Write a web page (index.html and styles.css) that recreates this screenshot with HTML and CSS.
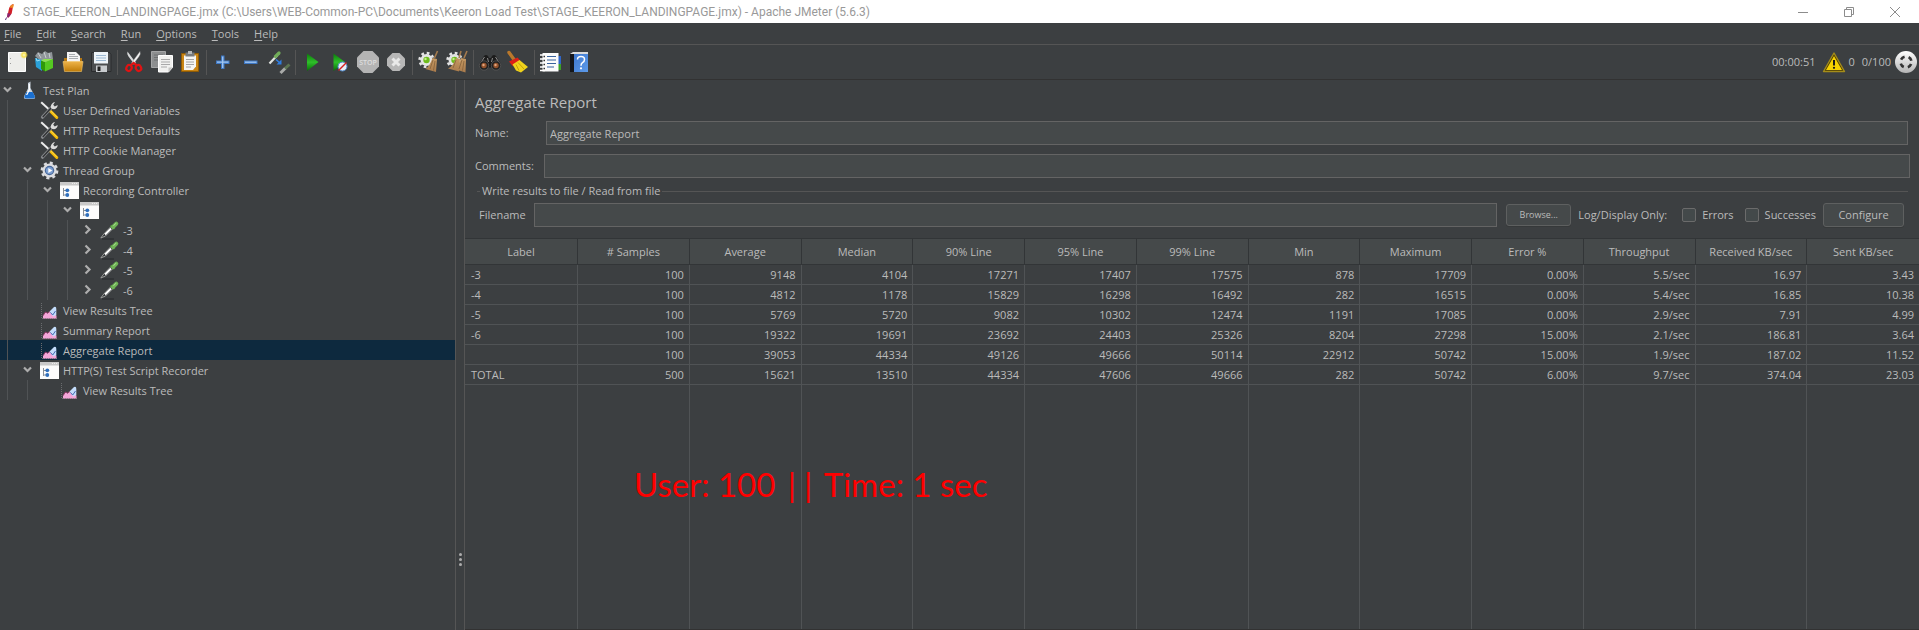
FILE: index.html
```
<!DOCTYPE html>
<html lang="en">
<head>
<meta charset="utf-8">
<title>STAGE_KEERON_LANDINGPAGE.jmx - Apache JMeter (5.6.3)</title>
<link rel="stylesheet" href="styles.css">
</head>
<body>
<svg class="defs" aria-hidden="true">
  <defs>
    <linearGradient id="g-green" x1="0" y1="0" x2="0" y2="1"><stop offset="0" stop-color="#0a7d0a"/><stop offset=".5" stop-color="#2fbf2a"/><stop offset="1" stop-color="#057005"/></linearGradient>
    <linearGradient id="g-orange" x1="0" y1="0" x2="0" y2="1"><stop offset="0" stop-color="#eeb44a"/><stop offset="1" stop-color="#c07c08"/></linearGradient>
    <linearGradient id="g-blue" x1="0" y1="0" x2="1" y2="1"><stop offset="0" stop-color="#3f78cf"/><stop offset="1" stop-color="#5d9bea"/></linearGradient>
    <linearGradient id="g-straw" x1="0" y1="0" x2="0" y2="1"><stop offset="0" stop-color="#c79a63"/><stop offset="1" stop-color="#a97b4c"/></linearGradient>
    <linearGradient id="g-metal" x1="0" y1="0" x2="0" y2="1"><stop offset="0" stop-color="#fff"/><stop offset="1" stop-color="#b4b4b4"/></linearGradient>
    <radialGradient id="g-glow"><stop offset="0" stop-color="#fffbd0"/><stop offset=".5" stop-color="#f6df4e"/><stop offset="1" stop-color="#f6df4e" stop-opacity="0"/></radialGradient>
  </defs>
  <symbol id="i-chev-down" viewBox="0 0 15 20"><path d="M4 7.500l3.500 3.500 3.500-3.500" fill="none" stroke="#adadad" stroke-width="2.200"/></symbol>
  <symbol id="i-chev-right" viewBox="0 0 15 20"><path d="M5.500 5.500l4 4-4 4" fill="none" stroke="#adadad" stroke-width="2.200"/></symbol>
  <symbol id="i-flask" viewBox="0 0 20 20"><path d="M7.500 3l1.500-.5L10.500 1.500V8l4.500 8.500q.5 2.500-2 2.500H6q-2.500 0-2-2.500L8 8.500V3z" fill="#c9d3de"/><path d="M6.300 12h6.400l2.200 4.500q.3 2-1.500 2H6q-1.800 0-1.500-2z" fill="#1a6fd0"/><path d="M8.700 4H10v6L7.300 15H6L8.700 9.500z" fill="#fff"/></symbol>
  <symbol id="i-tools" viewBox="0 0 20 20"><path d="M1.200 2.200l9 8.300" stroke="#ececec" stroke-width="2"/><path d="M9.800 10.500l7 7" stroke="#f3b905" stroke-width="3" stroke-linecap="round"/><path d="M10.800 11l6 6" stroke="#ffe16a" stroke-width=".8"/><path d="M2.500 17.200L12 7" stroke="#85878a" stroke-width="3.200" stroke-linecap="round"/><path d="M2.800 17L12 7" stroke="#2f3133" stroke-width="1.300"/><path d="M11 8.200c-.6-3 1-5.700 4-6.200l-1.800 2.800 1.600 1.600L17.700 5c0 3-2.500 4.600-5 4.100z" fill="#dcdcdc"/></symbol>
  <symbol id="i-gear" viewBox="0 0 20 20"><circle cx="9.500" cy="10.500" r="7" fill="#dcdde0"/><circle cx="9.500" cy="10.500" r="7.600" fill="none" stroke="#dcdde0" stroke-width="2.600" stroke-dasharray="3 2.970"/><circle cx="9.500" cy="10.500" r="4.700" fill="#45669a"/><circle cx="9.500" cy="10.500" r="3.600" fill="#7d9fd0"/><path d="M8.300 8l4 2.500-4 2.500z" fill="#fff"/></symbol>
  <symbol id="i-window" viewBox="0 0 20 20"><path d="M0 2h19v17H0z" fill="#fcfcfc"/><path d="M0 2h19v3.500H0z" fill="#c9c9c9"/><path d="M12 3.500h6" stroke="#eee" stroke-dasharray="1 1"/><path d="M3.500 8v8M3.500 10.500h3M3.500 15h3" stroke="#8a8f96" fill="none"/><circle cx="7.300" cy="10.300" r="1.900" fill="#2f6fbd"/><circle cx="7.300" cy="15" r="1.900" fill="#2f6fbd"/></symbol>
  <symbol id="i-pipette" viewBox="0 0 20 20"><path d="M2 19h12" stroke="#2b2d2f" stroke-width="1.200"/><path d="M.8 18l3-4L11 6.500l2 2L5.500 16z" fill="#2f3133" stroke="#a6a8a6" stroke-width=".9"/><path d="M5 14.500l6-6" stroke="#fff" stroke-width="1.800"/><path d="M10.500 5.500l4 3.500" stroke="#4f8f3c" stroke-width="2.200"/><path d="M13 7L16.300 3.600" stroke="#6fb356" stroke-width="4" stroke-linecap="round"/><path d="M13.500 5.800L16 3.200" stroke="#b0e09a" stroke-width="1"/></symbol>
  <symbol id="i-chart" viewBox="0 0 20 20"><path d="M1.500 3v15M2 18.500h15" stroke="#6b6d6f" stroke-dasharray="1 1"/><path d="M3 16l2.500-3.500 2 1 2-1.500 7 3.500v3H3z" fill="#f4a6d8"/><path d="M3 15.500l2.500-3.500 2 1 2-1.500" fill="none" stroke="#9a3a6c" stroke-width=".9"/><path d="M9.500 11.500L14 7q2.300-1 2.300 2v6l-3 1.500z" fill="#c3dcfb"/><path d="M10.500 12.500l2.200 2.500 2.800-4" fill="none" stroke="#3c5fae" stroke-width=".9"/></symbol>
  <symbol id="i-mgear" viewBox="0 0 28 28"><circle cx="11.500" cy="12" r="6" fill="#e4e4e4"/><circle cx="11.500" cy="12" r="6.900" fill="none" stroke="#e4e4e4" stroke-width="2.600" stroke-dasharray="2.700 2.720"/><circle cx="11.500" cy="12" r="3.200" fill="#6dbb1c"/><circle cx="10.500" cy="11" r="1.200" fill="#c4ee8a"/></symbol>
</svg>

<header class="titlebar">
  <svg class="feather" viewBox="0 0 16 18" aria-hidden="true"><path d="M11.500 1q-4 1-4.800 6l-1.500 7 1.500.5 3-4z" fill="#d22128"/><path d="M11.500 1q-3 .5-4 3.500l3.500.5q1-2.500.5-4z" fill="#ee8a25"/><path d="M5.500 10l3.500 1-2.500 3.500-1.500-.3z" fill="#8a2470"/><path d="M4.500 14.500L3.500 17" stroke="#5d2a7a"/></svg>
  <span class="caption">STAGE_KEERON_LANDINGPAGE.jmx (C:\Users\WEB-Common-PC\Documents\Keeron Load Test\STAGE_KEERON_LANDINGPAGE.jmx) - Apache JMeter (5.6.3)</span>
  <div class="window-buttons">
    <button aria-label="Minimize"><svg viewBox="0 0 12 12"><path d="M1 6.500h10"/></svg></button>
    <button aria-label="Restore"><svg viewBox="0 0 12 12"><path d="M1.500 3.500h7v7h-7zM3.500 3.500v-2h7v7h-2"/></svg></button>
    <button aria-label="Close"><svg viewBox="0 0 12 12"><path d="M1 1l10 10M11 1L1 11"/></svg></button>
  </div>
</header>

<nav class="menubar">
  <button><u>F</u>ile</button><button><u>E</u>dit</button><button><u>S</u>earch</button><button><u>R</u>un</button><button><u>O</u>ptions</button><button><u>T</u>ools</button><button><u>H</u>elp</button>
</nav>

<div class="toolbar">
  <button aria-label="New"><svg viewBox="0 0 28 28"><path d="M5.500 4.500h17v19h-17z" fill="#ededea" stroke="#fff"/><path d="M7.500 10v10" stroke="#9c9c9c" stroke-dasharray="1 4"/><circle cx="21" cy="7" r="4" fill="url(#g-glow)"/></svg></button>
  <button aria-label="Templates"><svg viewBox="0 0 28 28"><path d="M4 8l3-4 4 2 3-3 3 2 4-1 1 7-9 5z" fill="#8f9599"/><path d="M7 5l3 5M13 4l2 6M18 5l1 5" stroke="#c9cdd0"/><path d="M4 10l7 2v11l-6-4z" fill="#2aa0d8"/><path d="M5 10l1 3 3-1" stroke="#93dcf5" fill="none"/><path d="M10 12.500l4 1.500v9.500l-4-2.500z" fill="#2f9a08"/><path d="M14 14l8-3v9l-8 3.500z" fill="#55c922"/><path d="M10 12.500l3-1.500 9 0-8 3z" fill="#8be24f"/></svg></button>
  <button aria-label="Open"><svg viewBox="0 0 28 28"><path d="M8 4h9l4 4v8H8z" fill="#f4f4f4"/><path d="M10 6.500h6M10 8.500h9M10 10.500h9" stroke="#a9adb0"/><path d="M5 10h3v4h13v-4h2v12H5z" fill="#b37612"/><path d="M4 13.500h20l-1.500 10H5.500z" fill="url(#g-orange)" stroke="#f1c46c" stroke-width=".6"/></svg></button>
  <button aria-label="Save"><svg viewBox="0 0 28 28"><path d="M4.500 4.500h18l1.500 2v17h-19.500z" fill="#4c4e50" stroke="#2b2c2e"/><path d="M7 4h14v11.500H7z" fill="#eef4f9"/><path d="M9 7.500h10M9 10h10M9 12.500h10" stroke="#9cb9d3"/><path d="M9 17.500h11v6.500H9z" fill="#c9cccf"/><path d="M10.500 18.500h3v4.500h-3z" fill="#222"/></svg></button>
  <span class="sep"></span>
  <button aria-label="Cut"><svg viewBox="0 0 28 28"><path d="M7.500 3.500q-1 3 1 5l6 8 1.500-1.500z" fill="#d8dadb"/><path d="M20 3.500q1 3-1 5l-6 8-1.500-1.500z" fill="#f3f3f3" stroke="#999" stroke-width=".4"/><g fill="none" stroke="#e01313" stroke-width="2.200"><ellipse cx="9" cy="20" rx="2.600" ry="3" transform="rotate(30 9 20)"/><ellipse cx="18.500" cy="20" rx="2.600" ry="3" transform="rotate(-30 18.500 20)"/><path d="M10.500 17.500l3-2.500 3.500 2.500"/></g></svg></button>
  <button aria-label="Copy"><svg viewBox="0 0 28 28"><path d="M3.500 3.500h14v16h-14z" fill="#8d8f90" stroke="#a5a6a7"/><path d="M6 7h9M6 9.500h9M6 12h9" stroke="#6d6f70"/><path d="M10.500 7.500h14v12l-4 4.500h-10z" fill="#f1f1ef" stroke="#fff"/><path d="M13 11.500h9M13 14h9M13 16.500h9M13 19h6" stroke="#a9a9a9"/><path d="M24.500 19.500h-4v4.500z" fill="#c5c5c3"/></svg></button>
  <button aria-label="Paste"><svg viewBox="0 0 28 28"><path d="M5.500 5.500h17v18h-17z" fill="#c98514" stroke="#8f5b05"/><path d="M8 7.500h12v11l-3 3.500H8z" fill="#f5f5f3"/><path d="M10 11.500h8M10 14h8M10 16.500h8M10 19h5" stroke="#a4a4a4"/><path d="M9.500 4.500h9v4h-9z" fill="#777a7c"/><path d="M12 3h4v3h-4z" fill="#b5b7b8"/></svg></button>
  <span class="sep"></span>
  <button aria-label="Expand all"><svg viewBox="0 0 28 28"><path d="M12 7.500h3.500v5h5V16h-5v5H12v-5H7v-3.500h5z" fill="#3f78c4"/><path d="M13.700 8.500v11.500M8 14.200h11.500" stroke="#a3c8f2" stroke-width="1.300"/></svg></button>
  <button aria-label="Collapse all"><svg viewBox="0 0 28 28"><path d="M7 12.500h13.500V16H7z" fill="#3f78c4"/><path d="M8 14.200h11.500" stroke="#a3c8f2" stroke-width="1.300"/></svg></button>
  <button aria-label="Toggle"><svg viewBox="0 0 28 28"><path d="M4.500 15.500l8-8.500" stroke="#e1e4e1" stroke-width="2.200"/><path d="M10.500 8.500L14 5" stroke="#72ad5a" stroke-width="3.200" stroke-linecap="round"/><path d="M11 11.500l4 3.500" stroke="#2f7de0" stroke-width="1.600"/><path d="M16.500 11.500v5h-5z" fill="#2f7de0"/><path d="M15.500 25l5-5" stroke="#a9aba9" stroke-width="3"/><path d="M20 20.500l4.500-4" stroke="#5c7552" stroke-width="3"/></svg></button>
  <span class="sep"></span>
  <button aria-label="Start"><svg viewBox="0 0 28 28"><path d="M9 5.500v17.500L20.500 14z" fill="url(#g-green)"/></svg></button>
  <button aria-label="Start no pauses"><svg viewBox="0 0 28 28"><path d="M7.500 5.500v17.500L19 14z" fill="url(#g-green)"/><circle cx="16.500" cy="18.500" r="4.500" fill="#e8eef6" stroke="#4c86c8"/><path d="M12.500 22.500l8-8" stroke="#d32020" stroke-width="1.400"/></svg></button>
  <button aria-label="Stop" disabled><svg viewBox="0 0 28 28"><path d="M9.500 3h9L25 9.500v9L18.500 25h-9L3 18.500v-9z" fill="#b4b4b4"/><text x="14" y="17" class="stop-text">STOP</text></svg></button>
  <button aria-label="Shutdown" disabled><svg viewBox="0 0 28 28"><path d="M10.500 5h7L23 10.500v7L17.500 23h-7L5 17.500v-7z" fill="#b7b7b7"/><path d="M10.500 10.500l7 7M17.500 10.500l-7 7" stroke="#e9e9e9" stroke-width="3"/></svg></button>
  <span class="sep"></span>
  <button aria-label="Clear"><svg viewBox="0 0 28 28"><use href="#i-mgear"/><path d="M22.500 3l-3 7" stroke="#a57b4e" stroke-width="1.600"/><path d="M17.500 10l4.500 1-1 13-10.500-3q4-2.500 7-11z" fill="url(#g-straw)"/><path d="M18 12l-3 9M20 13l-1.500 9.500" stroke="#7d5c36" stroke-width=".7"/></svg></button>
  <button aria-label="Clear all"><svg viewBox="0 0 28 28"><use href="#i-mgear"/><path d="M18 3l-2 7M24 3l-3 7" stroke="#a57b4e" stroke-width="1.600"/><path d="M13 10l4 1-1 12.500-11-3q5-2 8-10.500z" fill="url(#g-straw)"/><path d="M18 10l5 1-.5 13.500-11-3.500q4-2 6.500-11z" fill="url(#g-straw)"/><path d="M19 12l-3 9M21 13l-1.500 9.500M13 12l-3 8" stroke="#7d5c36" stroke-width=".7"/></svg></button>
  <span class="sep"></span>
  <button aria-label="Search"><svg viewBox="0 0 28 28"><path d="M8 8q2-2 4 0l1 2h2l1-2q2-2 4 0l4.500 7.500v4h-21v-4z" fill="#1c1c1c"/><path d="M8.500 9l-3.500 5.500M19.500 9l3.500 5.500M11.500 10l1 4M16.500 10l-1 4" stroke="#8c8c8c"/><circle cx="8" cy="17.500" r="4.700" fill="#222" stroke="#5f5f5f" stroke-width=".7"/><circle cx="20" cy="17.500" r="4.700" fill="#222" stroke="#5f5f5f" stroke-width=".7"/><circle cx="8" cy="17.500" r="2.700" fill="#95532c"/><circle cx="20" cy="17.500" r="2.700" fill="#95532c"/><circle cx="7.500" cy="17" r="1.200" fill="#e0a47e"/><circle cx="19.500" cy="17" r="1.200" fill="#e0a47e"/></svg></button>
  <button aria-label="Reset search"><svg viewBox="0 0 28 28"><path d="M5 4.500l5 7" stroke="#b9782b" stroke-width="3.400" stroke-linecap="round"/><path d="M5 13.500l8.500-4 3 3.500-8 5z" fill="#dc1f17"/><path d="M8.500 16.500l7-4.500 8.500 7-7 5.500-5-2z" fill="#f0d21c"/><path d="M12 16.500l3 6M14 14.500l6 6.500" stroke="#b89605" stroke-width=".8"/></svg></button>
  <span class="sep"></span>
  <button aria-label="Function helper"><svg viewBox="0 0 28 28"><path d="M20 8h4v8h-4z" fill="#2f66c8"/><path d="M20 16h4v6h-4z" fill="#3c9f28"/><path d="M5.500 5h16v18.500h-16z" fill="#fbfbfb"/><path d="M3 7h5M3 11h5M3 15h5M3 19h5M3 22.500h5" stroke="#fff" stroke-width="1.600"/><path d="M6.500 8.500h1.500M6.500 12.500h1.500M6.500 16.500h1.500M6.500 20.500h1.500" stroke="#333" stroke-width="1.400"/><path d="M10 8.500h9M10 12h9M10 15.500h9M10 19h7" stroke="#39639d" stroke-width="1.100"/></svg></button>
  <button aria-label="Help"><svg viewBox="0 0 28 28"><path d="M5 6l3-2h15v2z" fill="#dadada"/><path d="M5 6h4v18H5z" fill="#15171c"/><path d="M9 6h14v18H9z" fill="url(#g-blue)"/><path d="M12.500 11.500q0-3 3.500-3t3.500 3q0 2-2 3.200-1.500 1-1.500 3" fill="none" stroke="#fff" stroke-width="1.500"/><circle cx="16" cy="20.300" r="1.100" fill="#fff"/></svg></button>
  <div class="status">
    <span>00:00:51</span>
    <button aria-label="Log errors"><svg viewBox="0 0 24 24"><path d="M12 3L22.500 21.500h-21z" fill="#4a3a00" stroke="#a48c1a" stroke-width="1.400" stroke-linejoin="round"/><path d="M12 6l8 14H4z" fill="#f6d100"/><path d="M12 10v5.500" stroke="#1a1a1a" stroke-width="2"/><circle cx="12" cy="17.800" r="1.100" fill="#1a1a1a"/></svg></button>
    <span class="errors">0</span>
    <span>0/100</span>
    <svg class="remote" viewBox="0 0 24 24" aria-hidden="true"><circle cx="12" cy="12" r="11" fill="url(#g-metal)"/><circle cx="12" cy="12" r="5.500" fill="none" stroke="#333" stroke-width="2.600" stroke-dasharray="4.400 4.240" stroke-dashoffset="-2.100"/></svg>
  </div>
</div>

<main class="workspace">
  <ul class="tree">
    <li><svg class="chev"><use href="#i-chev-down"/></svg><svg class="icon"><use href="#i-flask"/></svg>Test Plan</li>
    <li><i></i><b></b><svg class="icon"><use href="#i-tools"/></svg>User Defined Variables</li>
    <li><i></i><b></b><svg class="icon"><use href="#i-tools"/></svg>HTTP Request Defaults</li>
    <li><i></i><b></b><svg class="icon"><use href="#i-tools"/></svg>HTTP Cookie Manager</li>
    <li><i></i><svg class="chev"><use href="#i-chev-down"/></svg><svg class="icon"><use href="#i-gear"/></svg>Thread Group</li>
    <li><i></i><i></i><svg class="chev"><use href="#i-chev-down"/></svg><svg class="icon"><use href="#i-window"/></svg>Recording Controller</li>
    <li><i></i><i></i><i></i><svg class="chev"><use href="#i-chev-down"/></svg><svg class="icon"><use href="#i-window"/></svg></li>
    <li><i></i><i></i><i></i><i></i><svg class="chev"><use href="#i-chev-right"/></svg><svg class="icon"><use href="#i-pipette"/></svg>-3</li>
    <li><i></i><i></i><i></i><i></i><svg class="chev"><use href="#i-chev-right"/></svg><svg class="icon"><use href="#i-pipette"/></svg>-4</li>
    <li><i></i><i></i><i></i><i></i><svg class="chev"><use href="#i-chev-right"/></svg><svg class="icon"><use href="#i-pipette"/></svg>-5</li>
    <li><i></i><i></i><i></i><i></i><svg class="chev"><use href="#i-chev-right"/></svg><svg class="icon"><use href="#i-pipette"/></svg>-6</li>
    <li><i></i><b></b><svg class="icon"><use href="#i-chart"/></svg>View Results Tree</li>
    <li><i></i><b></b><svg class="icon"><use href="#i-chart"/></svg>Summary Report</li>
    <li class="selected"><i></i><b></b><svg class="icon"><use href="#i-chart"/></svg>Aggregate Report</li>
    <li><i></i><svg class="chev"><use href="#i-chev-down"/></svg><svg class="icon"><use href="#i-window"/></svg>HTTP(S) Test Script Recorder</li>
    <li><i></i><i></i><b></b><svg class="icon"><use href="#i-chart"/></svg>View Results Tree</li>
  </ul>
  <div class="divider"><span></span><span></span><span></span></div>
  <section class="report">
    <h1>Aggregate Report</h1>
    <div class="field name-field"><label for="name">Name:</label><input id="name" type="text" value="Aggregate Report"></div>
    <div class="field comment-field"><label for="comments">Comments:</label><input id="comments" type="text"></div>
    <fieldset>
      <legend>Write results to file / Read from file</legend>
      <div class="file-row">
        <label for="filename">Filename</label>
        <input id="filename" type="text">
        <button class="browse">Browse...</button>
        <span class="log-label">Log/Display Only:</span>
        <label class="check"><input type="checkbox">Errors</label>
        <label class="check"><input type="checkbox">Successes</label>
        <button class="configure">Configure</button>
      </div>
    </fieldset>
    <div class="table-area">
      <table>
        <thead><tr><th>Label</th><th># Samples</th><th>Average</th><th>Median</th><th>90% Line</th><th>95% Line</th><th>99% Line</th><th>Min</th><th>Maximum</th><th>Error %</th><th>Throughput</th><th>Received KB/sec</th><th>Sent KB/sec</th></tr></thead>
        <tbody>
          <tr><td>-3</td><td>100</td><td>9148</td><td>4104</td><td>17271</td><td>17407</td><td>17575</td><td>878</td><td>17709</td><td>0.00%</td><td>5.5/sec</td><td>16.97</td><td>3.43</td></tr>
          <tr><td>-4</td><td>100</td><td>4812</td><td>1178</td><td>15829</td><td>16298</td><td>16492</td><td>282</td><td>16515</td><td>0.00%</td><td>5.4/sec</td><td>16.85</td><td>10.38</td></tr>
          <tr><td>-5</td><td>100</td><td>5769</td><td>5720</td><td>9082</td><td>10302</td><td>12474</td><td>1191</td><td>17085</td><td>0.00%</td><td>2.9/sec</td><td>7.91</td><td>4.99</td></tr>
          <tr><td>-6</td><td>100</td><td>19322</td><td>19691</td><td>23692</td><td>24403</td><td>25326</td><td>8204</td><td>27298</td><td>15.00%</td><td>2.1/sec</td><td>186.81</td><td>3.64</td></tr>
          <tr><td></td><td>100</td><td>39053</td><td>44334</td><td>49126</td><td>49666</td><td>50114</td><td>22912</td><td>50742</td><td>15.00%</td><td>1.9/sec</td><td>187.02</td><td>11.52</td></tr>
          <tr><td>TOTAL</td><td>500</td><td>15621</td><td>13510</td><td>44334</td><td>47606</td><td>49666</td><td>282</td><td>50742</td><td>6.00%</td><td>9.7/sec</td><td>374.04</td><td>23.03</td></tr>
          <tr class="filler"><td></td><td></td><td></td><td></td><td></td><td></td><td></td><td></td><td></td><td></td><td></td><td></td><td></td></tr>
        </tbody>
      </table>
      <p class="note">User: 100 <span>|</span><span>|</span> Time: 1 sec</p>
    </div>
  </section>
</main>
</body>
</html>
```
FILE: styles.css
```
* { box-sizing: border-box; }
html, body { height: 100%; margin: 0; }
body {
  display: flex;
  flex-direction: column;
  overflow: hidden;
  background: #3c3f41;
  color: #bbbbbb;
  font: 11px/16px "Open Sans", "Noto Sans", sans-serif;
}
button, input { font: inherit; color: inherit; }
button { padding: 0; border: 0; background: none; }
svg { display: block; }
.defs { position: absolute; width: 0; height: 0; }

.titlebar {
  display: flex;
  align-items: center;
  height: 23px;
  padding-left: 2px;
  background: #ffffff;
  color: #999999;
}
.caption { font: 12px/16px Roboto, "Open Sans", sans-serif; }
.feather { width: 16px; height: 18px; margin-right: 5px; }
.window-buttons { display: flex; margin-left: auto; padding-right: 1px; }
.window-buttons button { width: 46px; height: 22px; }
.window-buttons svg { width: 12px; height: 12px; margin: auto; fill: none; stroke: #8c8c8c; }

.menubar {
  display: flex;
  gap: 15px;
  height: 22px;
  padding: 0 4px;
  border-bottom: 1px solid #555555;
}
.menubar u { text-underline-offset: 2px; }

.toolbar {
  display: flex;
  align-items: center;
  height: 35px;
  padding: 0 1px 0 3px;
  border-bottom: 1px solid #323232;
}
.toolbar > button, .toolbar > button svg { width: 28px; height: 28px; }
.sep { width: 1px; height: 25px; margin: 0 2px; background: #555555; }
.stop-text { font: 600 7px "Open Sans", sans-serif; fill: #dddddd; text-anchor: middle; }
.status { display: flex; align-items: center; margin-left: auto; }
.status svg { width: 24px; height: 24px; }
.status button { margin: 0 3px 0 6px; }
.errors { margin-right: 7px; }
.remote { margin-left: 3px; }

.workspace { display: flex; flex: 1; min-height: 0; }
.tree {
  flex: 0 0 455px;
  margin: 0;
  padding: 0;
  list-style: none;
}
.tree li { display: flex; height: 20px; line-height: 22px; }
.tree i { width: 20px; height: 20px; padding-left: 7px; }
.tree i::before { content: ""; display: block; width: 1px; height: 20px; background: #505355; }
.tree b { width: 15px; }
.chev { width: 15px; height: 20px; }
.icon { width: 20px; height: 20px; margin: 0 3px 0 5px; }
.tree .selected { background: #0d293e; }

.divider {
  display: flex;
  flex: 0 0 10px;
  flex-direction: column;
  align-items: center;
  justify-content: flex-end;
  gap: 2px;
  padding-bottom: 64px;
  border: solid #555555;
  border-width: 0 1px;
}
.divider span { width: 3px; height: 3px; border-radius: 50%; background: #adadad; }

.report { display: flex; flex: 1; flex-direction: column; min-width: 0; }
h1 { margin: 11px 10px 7px; font-size: 15px; font-weight: 400; line-height: 23px; }
.field { display: flex; align-items: center; margin: 0 9px 9px 10px; }
.name-field { padding-right: 2px; }
.comment-field { margin-bottom: 4px; }
.field label { width: 69px; }
.name-field label { width: 71px; }
input[type="text"] {
  flex: 1;
  min-width: 0;
  height: 24px;
  padding: 0 3px;
  border: 1px solid #646464;
  border-radius: 0;
  background: #45494a;
}
fieldset { min-width: 0; margin: 0 11px 11px 12px; padding: 0; border: 0; border-top: 1px solid #555555; }
legend { margin-left: 3px; padding: 0 2px; line-height: 18px; }
.file-row { display: flex; align-items: center; padding: 3px 4px 0 2px; }
.file-row > label:first-child { width: 55px; }
.browse, .configure {
  border: 1px solid #5e6060;
  border-radius: 3px;
  background: #45494a;
  box-shadow: 0 1px #36393a;
}
.browse { width: 65px; height: 22px; margin: 0 7px 0 9px; font-size: 9px; }
.configure { width: 81px; height: 24px; font-size: 11px; }
.log-label { margin-right: 11px; }
.check { display: flex; align-items: center; margin-right: 7px; }
.check input {
  width: 14px;
  height: 14px;
  margin: 0 6px 0 4px;
  appearance: none;
  border: 1px solid #6b6b6b;
  border-radius: 2px;
  background: #43494a;
}

.table-area { position: relative; flex: 1; min-height: 0; }
table { width: 100%; height: 100%; table-layout: fixed; border-spacing: 0; border-bottom: 1px solid #323232; }
th, td { height: 20px; padding: 0 5px; border: solid #505355; border-width: 0 1px 1px 0; line-height: 18px; text-align: right; }
th { height: 27px; border-color: #323537; border-top-width: 1px; background: #45494a; font-weight: 400; text-align: center; }
th:first-child { width: 113px; }
td:first-child { padding-left: 6px; text-align: left; }
th:last-child, td:last-child { border-right: 0; }
.filler td { height: auto; border-bottom: 0; }
.note {
  position: absolute;
  top: 224px;
  left: 169px;
  margin: 0;
  color: #ff0000;
  font: 33px/44px Lato, sans-serif;
  white-space: nowrap;
}
.note span { margin: 0 4px; }
```
